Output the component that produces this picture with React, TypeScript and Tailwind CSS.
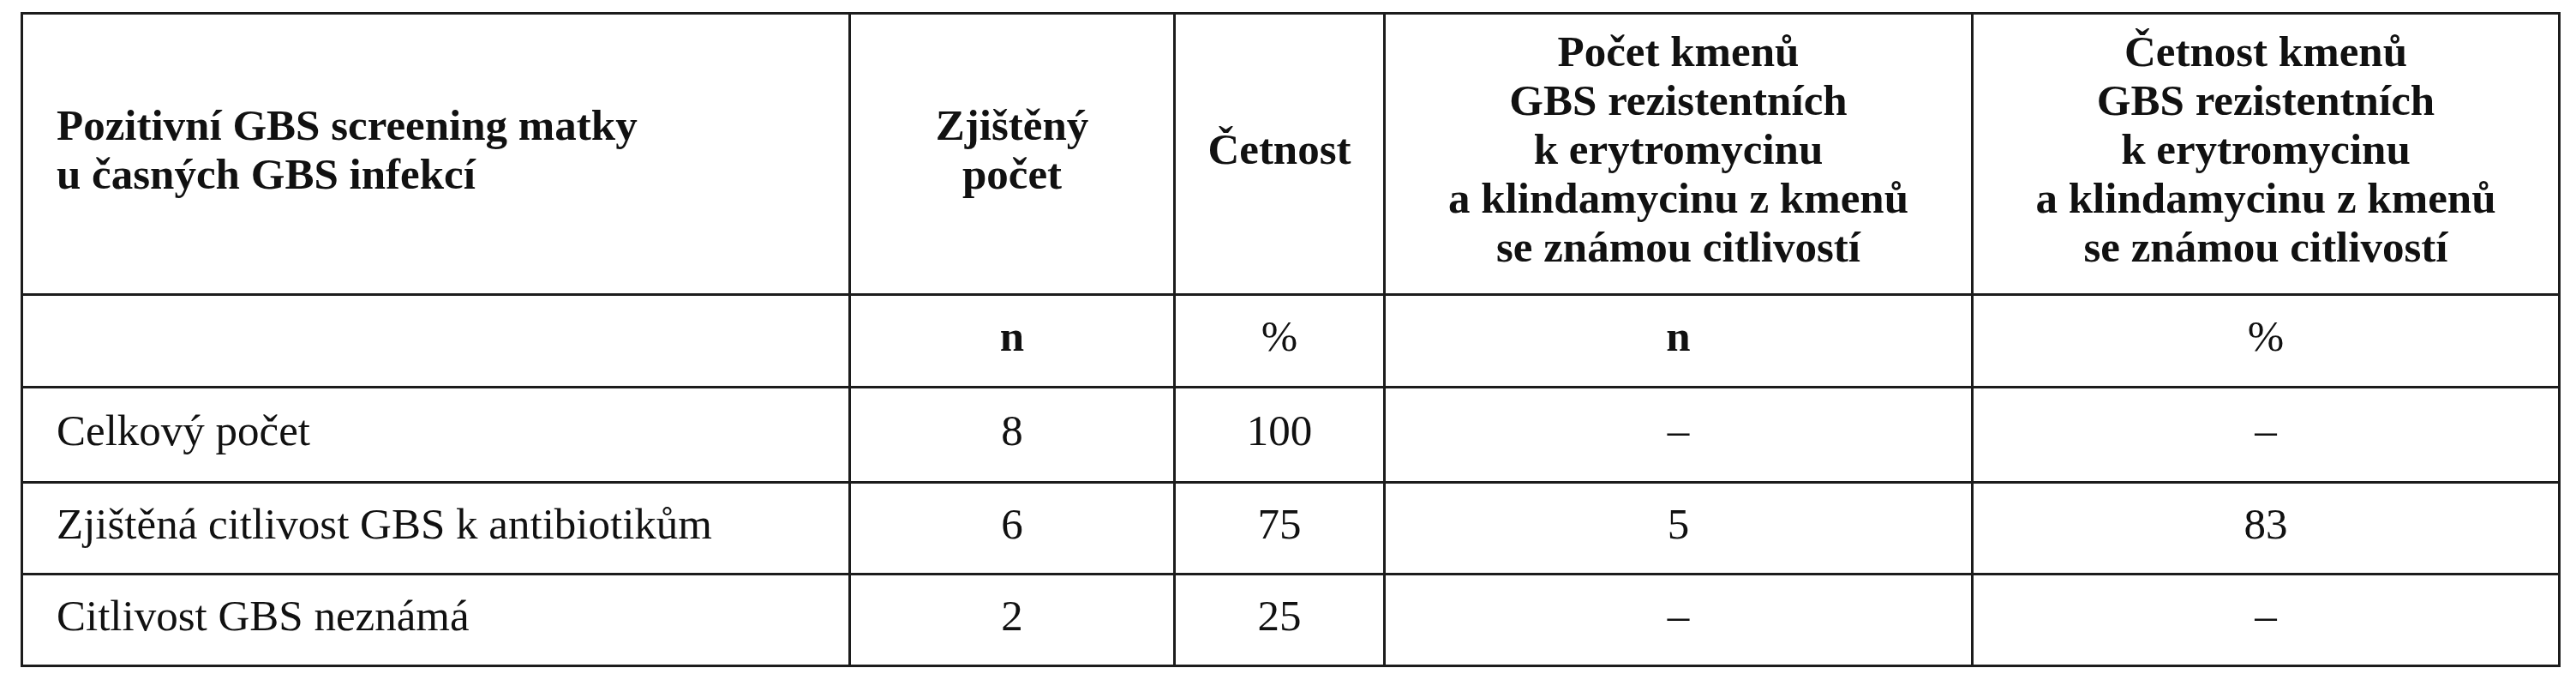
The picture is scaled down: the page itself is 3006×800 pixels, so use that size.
import React from "react";

const headerLeft = ["Pozitivní GBS screening matky", "u časných GBS infekcí"];
const colA = ["Počet kmenů", "GBS rezistentních", "k erytromycinu", "a klindamycinu z kmenů", "se známou citlivostí"];
const colB = ["Četnost kmenů", "GBS rezistentních", "k erytromycinu", "a klindamycinu z kmenů", "se známou citlivostí"];

const rows: [string, string, string, string, string][] = [
  ["Celkový počet", "8", "100", "–", "–"],
  ["Zjištěná citlivost GBS k antibiotikům", "6", "75", "5", "83"],
  ["Citlivost GBS neznámá", "2", "25", "–", "–"],
];

function Lines({ lines }: { lines: string[] }) {
  return (
    <div>
      {lines.map((l, i) => (
        <div key={i}>{l}</div>
      ))}
    </div>
  );
}

export default function App() {
  const left = "bg-white flex items-center pl-[39px] pb-[10px]";
  const center = "bg-white flex items-center justify-center text-center pb-[10px]";
  return (
    <div className="w-[3006px] h-[800px] bg-white pt-[14px] pl-[24px] font-['Liberation_Serif',serif] text-[51px] leading-[57px] text-[#111]">
      <div className="grid w-fit grid-cols-[963px_376px_242px_683px_682px] grid-rows-[325px_105px_108px_104px_104px] gap-[3px] border-[3px] border-[#1c1c1c] bg-[#1c1c1c]">
        <div className={`${left} font-bold`}>
          <Lines lines={headerLeft} />
        </div>
        <div className={`${center} font-bold`}>
          <Lines lines={["Zjištěný", "počet"]} />
        </div>
        <div className={`${center} font-bold`}>Četnost</div>
        <div className={`${center} font-bold`}>
          <Lines lines={colA} />
        </div>
        <div className={`${center} font-bold`}>
          <Lines lines={colB} />
        </div>

        <div className={left}></div>
        <div className={`${center} font-bold`}>n</div>
        <div className={center}>%</div>
        <div className={`${center} font-bold`}>n</div>
        <div className={center}>%</div>

        {rows.map((r, i) => (
          <React.Fragment key={i}>
            <div className={left}>{r[0]}</div>
            <div className={center}>{r[1]}</div>
            <div className={center}>{r[2]}</div>
            <div className={center}>{r[3]}</div>
            <div className={center}>{r[4]}</div>
          </React.Fragment>
        ))}
      </div>
    </div>
  );
}
